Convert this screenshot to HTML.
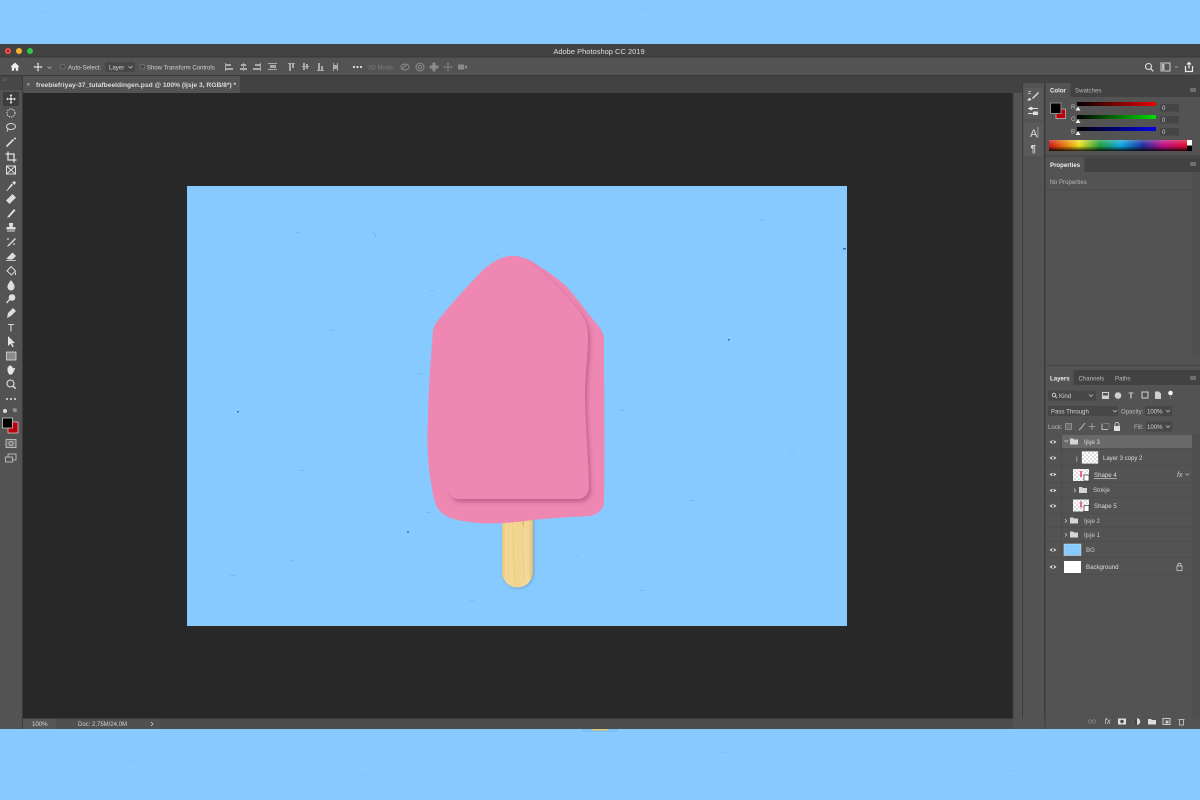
<!DOCTYPE html>
<html><head><meta charset="utf-8"><title>Adobe Photoshop CC 2019</title>
<style>
html,body{margin:0;padding:0;background:#88caff;width:1200px;height:800px;overflow:hidden}
svg{display:block;position:absolute;left:0;top:0;filter:blur(.3px)}
text{font-family:"Liberation Sans",sans-serif;font-size:6.1px;fill:#d2d2d2}
</style></head><body>
<svg width="1200" height="800" viewBox="0 0 1200 800" xmlns="http://www.w3.org/2000/svg">
<defs>
<filter id="sh" x="-20%" y="-20%" width="140%" height="140%"><feDropShadow dx="2" dy="3" stdDeviation="2.2" flood-color="#9a3068" flood-opacity=".5"/></filter>
<filter id="sh2" x="-20%" y="-20%" width="140%" height="140%"><feDropShadow dx="1" dy="1" stdDeviation="1.2" flood-color="#2a5f9a" flood-opacity=".35"/></filter>
<linearGradient id="spec" x1="0" x2="1" y1="0" y2="0">
<stop offset="0" stop-color="#d01818"/><stop offset=".12" stop-color="#e88010"/><stop offset=".22" stop-color="#eee020"/><stop offset=".37" stop-color="#20a040"/><stop offset=".52" stop-color="#10a8e0"/><stop offset=".68" stop-color="#2030a0"/><stop offset=".83" stop-color="#c01088"/><stop offset="1" stop-color="#e01030"/>
</linearGradient>
<linearGradient id="specv" x1="0" x2="0" y1="0" y2="1"><stop offset="0" stop-color="#fff" stop-opacity=".25"/><stop offset=".45" stop-color="#fff" stop-opacity="0"/><stop offset=".55" stop-color="#000" stop-opacity="0"/><stop offset="1" stop-color="#000" stop-opacity=".85"/></linearGradient>
<linearGradient id="r" x1="0" x2="1"><stop offset="0" stop-color="#000"/><stop offset="1" stop-color="#ee0000"/></linearGradient>
<linearGradient id="g" x1="0" x2="1"><stop offset="0" stop-color="#000"/><stop offset="1" stop-color="#00e000"/></linearGradient>
<linearGradient id="b" x1="0" x2="1"><stop offset="0" stop-color="#000"/><stop offset="1" stop-color="#0000e6"/></linearGradient>
<linearGradient id="stick" x1="0" x2="1"><stop offset="0" stop-color="#e9c67e"/><stop offset=".15" stop-color="#f3d998"/><stop offset=".55" stop-color="#f2d48c"/><stop offset=".85" stop-color="#f3da9c"/><stop offset="1" stop-color="#e0bb72"/></linearGradient>
<pattern id="chk" width="4" height="4" patternUnits="userSpaceOnUse"><rect width="4" height="4" fill="#fff"/><rect width="2" height="2" fill="#ddd"/><rect x="2" y="2" width="2" height="2" fill="#ddd"/></pattern>
<g id="eye"><path d="M-3.5 0Q0-3.2 3.5 0Q0 3.2-3.5 0Z" fill="#ddd"/><circle r="1.1" fill="#444"/></g>
<g id="folder"><path d="M-4-3h3l1 1h4v5h-8z" fill="#d5d5d5"/></g>
</defs>

<!-- outer background -->
<rect x="-2" y="-2" width="1204" height="804" fill="#88caff"/>
<g fill="#70b6f2" opacity=".3">
<rect x="40" y="12" width="7" height="1"/><rect x="300" y="22" width="5" height="1"/><rect x="640" y="8" width="6" height="1"/><rect x="980" y="28" width="7" height="1"/><rect x="130" y="760" width="8" height="1"/><rect x="360" y="775" width="6" height="1"/><rect x="720" y="752" width="7" height="1"/><rect x="1010" y="770" width="8" height="1"/><rect x="480" y="785" width="5" height="1"/><rect x="90" y="745" width="5" height="1"/>
</g>
<rect x="582" y="729" width="36" height="3" fill="#74b4ea" opacity=".6"/>
<rect x="592" y="729" width="16" height="1.6" fill="#d8c878"/>

<!-- window -->
<rect x="0" y="44" width="1200" height="685" fill="#535353"/>
<rect x="0" y="44" width="1200" height="13" fill="#424242"/>
<rect x="0" y="56.5" width="1200" height="1" fill="#383838"/>
<circle cx="8" cy="51" r="3" fill="#f0504a"/><circle cx="8" cy="51" r="1" fill="#7a1410"/>
<circle cx="19" cy="51" r="3" fill="#f5b52c"/>
<circle cx="30" cy="51" r="3" fill="#2fc944"/>
<text x="599" y="54" text-anchor="middle" style="font-size:7.5px;fill:#dedede">Adobe Photoshop CC 2019</text>

<!-- options bar -->
<rect x="0" y="57.5" width="1200" height="18.5" fill="#535353"/>
<rect x="0" y="75" width="1200" height="1" fill="#3c3c3c"/>
<path d="M15 62.5l-4.5 4.3h1.3v4h2.3v-2.5h1.8v2.500h2.300v-4h1.300z" fill="#eee"/>
<g fill="#ddd"><rect x="37.500" y="64" width="1" height="6"/><rect x="35" y="66.500" width="6" height="1"/><circle cx="38" cy="67" r="1.200"/><path d="M38 62.500l1.400 1.800h-2.800zM38 71.500l1.400-1.800h-2.800zM33.500 67l1.800-1.400v2.800zM42.500 67l-1.800-1.400v2.800z"/></g>
<path d="M47.500 66.500l2 2 2-2" fill="none" stroke="#aaa" stroke-width=".8"/>
<rect x="60.500" y="64.500" width="4.500" height="4.500" rx="1" fill="#4a4a4a" stroke="#777" stroke-width=".7"/>
<text x="68" y="69.300">Auto-Select:</text>
<rect x="105" y="62" width="30" height="10" rx="1" fill="#474747"/>
<text x="109" y="69.300">Layer</text>
<path d="M128.500 66.300l2 1.800 2-1.800" fill="none" stroke="#bbb" stroke-width=".8"/>
<rect x="140" y="64.500" width="4.500" height="4.500" rx="1" fill="#4a4a4a" stroke="#777" stroke-width=".7"/>
<text x="147" y="69.300" style="font-size:6px">Show Transform Controls</text>
<g fill="#a9a9a9">
<rect x="225" y="63" width="1" height="8"/><rect x="226" y="64" width="5" height="2"/><rect x="226" y="68" width="7" height="2"/>
<rect x="243" y="63" width="1" height="8"/><rect x="241" y="64" width="5" height="2"/><rect x="240" y="68" width="7" height="2"/>
<rect x="260" y="63" width="1" height="8"/><rect x="255" y="64" width="5" height="2"/><rect x="253" y="68" width="7" height="2"/>
<rect x="268" y="63" width="9" height="1"/><rect x="270" y="65" width="6" height="3"/><rect x="268" y="69" width="9" height="1"/>
<rect x="288" y="63" width="7" height="1"/><rect x="289" y="64" width="2" height="7"/><rect x="292" y="64" width="2" height="4"/>
<rect x="302" y="66" width="7" height="1"/><rect x="303" y="63" width="2" height="7"/><rect x="306" y="64" width="2" height="5"/>
<rect x="317" y="70" width="7" height="1"/><rect x="318" y="63" width="2" height="7"/><rect x="321" y="66" width="2" height="4"/>
<rect x="333" y="63" width="1" height="8"/><rect x="337" y="63" width="1" height="8"/><rect x="334" y="65" width="3" height="4"/>
</g>
<g fill="#e2e2e2"><circle cx="354" cy="67" r="1.100"/><circle cx="357.500" cy="67" r="1.100"/><circle cx="361" cy="67" r="1.100"/></g>
<text x="368" y="69.300" style="fill:#7d7d7d">3D Mode:</text>
<g fill="none" stroke="#8b8b8b" stroke-width="1">
<ellipse cx="405" cy="67" rx="4" ry="3"/><path d="M402 69l5-5"/>
<circle cx="420" cy="67" r="4"/><circle cx="420" cy="67" r="1.800"/>
</g>
<g fill="#8b8b8b">
<circle cx="434" cy="67" r="3"/><path d="M434 62l2 2h-4zM434 72l2-2h-4zM429 67l2-2v4zM439 67l-2-2v4z"/>
<circle cx="448" cy="67" r="1.200"/><path d="M448 62.500l1.500 2h-3zM448 71.500l1.500-2h-3zM443.500 67l2-1.500v3zM452.500 67l-2-1.500v3z"/>
<rect x="458" y="64.500" width="6" height="5"/><path d="M464 67l3-2v4z"/>
</g>
<circle cx="1148.500" cy="66.500" r="3" fill="none" stroke="#e0e0e0" stroke-width="1.100"/><path d="M1150.700 68.700l2.600 2.600" stroke="#e0e0e0" stroke-width="1.200"/>
<rect x="1161" y="63" width="9" height="8" fill="#555" stroke="#ccc" stroke-width="1"/><rect x="1162" y="64" width="2.500" height="6" fill="#bbb"/>
<rect x="1175" y="66.500" width="3" height="1" fill="#999"/>
<path d="M1185.500 66v5.500h7V66M1189 68.500V62.500M1187 64.500l2-2 2 2" fill="none" stroke="#eee" stroke-width="1.200"/>

<!-- tab row -->
<rect x="0" y="76" width="1200" height="17" fill="#424242"/>
<rect x="23" y="76" width="217" height="17" fill="#535353"/>
<path d="M27 83l2.500 2.500M29.500 83L27 85.500" stroke="#aaa" stroke-width=".7"/>
<text x="36" y="87" style="font-size:6.7px;font-weight:700;fill:#dcdcdc">freebiefriyay-37_tutafbeeldingen.psd @ 100% (Ijsje 3, RGB/8*) *</text>

<!-- toolbar -->
<rect x="0" y="76" width="22" height="14" fill="#474747"/>
<path d="M3 78l1.500 1.500L3 81M5.500 78L7 79.500 5.500 81" fill="none" stroke="#8a8a8a" stroke-width=".5"/>
<rect x="0" y="90" width="22" height="639" fill="#535353"/>
<rect x="22" y="76" width="1" height="653" fill="#3a3a3a"/>
<rect x="3" y="92" width="16" height="14" fill="#3d3d3d"/>
<g fill="#dedede">
<rect x="10.500" y="95.500" width="1" height="7"/><rect x="7.500" y="98.500" width="7" height="1"/><circle cx="11" cy="99" r="1.300"/><path d="M11 94l1.500 2h-3zM11 104l1.500-2h-3zM6 99l2-1.500v3zM16 99l-2-1.500v3z"/>
</g>
<g fill="none" stroke="#dedede" stroke-width="1">
<circle cx="11" cy="113" r="4" stroke-dasharray="1.400 1"/>
<ellipse cx="11" cy="126.500" rx="4.500" ry="3"/><path d="M8 129l-1 2.500"/>
<path d="M6.500 146.500l7-7" stroke-width="1.600"/><path d="M15 137.500v2M14 138.500h2"/>
<path d="M8 151.500v8.500h8.500M5.500 154h8.500v8.500" stroke-width="1.300"/>
<rect x="6.500" y="166" width="9" height="8"/><path d="M6.500 166l9 8M15.500 166l-9 8"/>
</g>
<g fill="#dedede">
<path d="M7 190l-1 1 1 0 6-6-1.500-1.500zM12 182.500l2.500-1.500 1.500 1.500-1.500 2.500z"/>
<path d="M6 201.500l6.500-6.500 3.500 3.500-6.500 6.500z" transform="translate(0,-1)"/>
<path d="M7 218l1-2 6-7 1.500 1.500-6 6.500z"/>
<path d="M9 223h4v3l-1 1h3.500v2.500h-9V227H10l-1-1zM7 230.500h8v1H7z"/>
<path d="M7 247l1-2 7-7 1 1-7 7z"/><circle cx="14" cy="244" r=".9"/><circle cx="8" cy="239" r=".9"/>
<path d="M6.500 258.500l6-6 3.500 3.500-3.500 3.500h-4z"/><rect x="6" y="260" width="10" height=".8"/>
</g>
<g fill="none" stroke="#dedede" stroke-width="1"><path d="M7 271l4-4.500 4.500 4.500-4 4z"/><path d="M15.500 272.500v2.500"/></g>
<g fill="#dedede">
<path d="M11 280q4 5 3.500 7a3.500 3.500 0 0 1-7 0q-.5-2 3.500-7z"/>
<circle cx="12" cy="297.500" r="3.300"/><path d="M10 300l-3 3.500-1-1 3-3.500z"/>
<path d="M7 318l1-5 5-5 3 3-5 5z"/>
</g>
<text x="11" y="331.500" text-anchor="middle" style="font-size:11px;fill:#e2e2e2">T</text>
<path d="M8 336v10l2.500-2.200 2 3.500 1.300-.8-2-3.400h3.200z" fill="#e2e2e2"/>
<rect x="6.500" y="352" width="9.500" height="8" fill="#8a8a8a" stroke="#ddd" stroke-width=".8"/>
<path d="M7.500 371v-3.500l1 0v-1.500h1v-.8h1v.8h1v.5h1v1.500h1v.7l1-1 .7.7-1.700 3.600-1.500 2.500H9z" fill="#e6e6e6"/>
<circle cx="10.500" cy="383.500" r="3.500" fill="none" stroke="#dedede" stroke-width="1.100"/><path d="M13 386l2.700 2.700" stroke="#dedede" stroke-width="1.400"/>
<g fill="#e2e2e2"><circle cx="7" cy="399" r="1"/><circle cx="11" cy="399" r="1"/><circle cx="15" cy="399" r="1"/></g>
<circle cx="5" cy="411" r="2" fill="#ddd"/><path d="M13 409h3v3" fill="none" stroke="#ccc" stroke-width=".8"/><path d="M15 412l-2-2.500" stroke="#ccc" stroke-width=".8"/>
<rect x="8" y="422" width="10" height="11" fill="#b8000f" stroke="#eee" stroke-width=".6"/>
<rect x="2.500" y="418" width="10" height="10" fill="#000" stroke="#ddd" stroke-width=".7"/>
<rect x="6" y="439.500" width="10" height="8" fill="#6c6c6c" stroke="#ccc" stroke-width=".8"/><circle cx="11" cy="443.500" r="2" fill="none" stroke="#ccc" stroke-width=".8"/>
<rect x="8" y="454" width="8" height="6" fill="none" stroke="#ccc" stroke-width=".8"/><rect x="5.500" y="457" width="7" height="5" fill="#555" stroke="#ccc" stroke-width=".8"/>

<!-- pasteboard -->
<rect x="23" y="93" width="990" height="625.500" fill="#282828"/>

<!-- canvas -->
<rect x="187" y="186" width="660" height="440" fill="#87caff"/>
<g fill="#5fa8e6" opacity=".45">
<rect x="296" y="232" width="3" height="1.200"/><rect x="373" y="232" width="1.500" height="6" transform="rotate(-20 373 232)"/><rect x="417" y="373" width="4" height="1"/><rect x="300" y="470" width="5" height="1"/><rect x="690" y="500" width="5" height="1"/><rect x="760" y="220" width="4" height="1"/><rect x="640" y="590" width="4" height="1"/><rect x="230" y="575" width="5" height="1"/><rect x="620" y="410" width="4" height="1"/><rect x="790" y="450" width="4" height="1"/><rect x="330" y="330" width="5" height="1"/><rect x="470" y="600" width="4" height="1"/><rect x="430" y="290" width="4" height="1"/><rect x="575" y="555" width="3" height="1"/><rect x="290" y="560" width="3" height="1"/><rect x="495" y="255" width="3" height="1"/><rect x="427" y="512" width="4" height="1"/>
</g>
<rect x="843" y="248" width="3" height="1.500" fill="#2b6cb8"/><rect x="728" y="339" width="1.500" height="1.500" fill="#1c5ca8"/><rect x="237" y="411" width="2" height="1.500" fill="#2b78c8"/><rect x="407" y="531" width="2" height="1.500" fill="#2b78c8"/>

<!-- popsicle: stick -->
<path d="M502 495h31v77a15.500 15.500 0 0 1-31 0z" fill="url(#stick)" filter="url(#sh2)"/>
<g stroke="#d9ae5d" stroke-width=".6" fill="none" opacity=".4"><path d="M508 500q1 40 0 80"/><path d="M513 500q-1 30 2 85"/><path d="M523 500q2 20 0 30q-1 20 2 50"/><path d="M528 510v60"/></g>
<path d="M520 500q5 10 4 28q-4-6-4-28z" fill="#dcae5c" opacity=".55"/>
<rect x="502" y="499" width="31" height="6" fill="#c8975a" opacity=".35"/>

<!-- back body -->
<path d="M513 256C500 256 488 265 480 273C466 288 452 303 440 318C435 324 433 328 433 332C431 356 428 395 428 420C426 450 429 478 435 503C439 513 447 518 458 520C475 524 497 525 533 520C552 518 572 517 590 516C599 514 603 509 604 503C605 450 604 390 604 340C604 335 602 331 600 328C596 323 591 317 587 312C581 304 574 295 567 287C558 279 549 272 540 267C532 260 522 256 513 256Z" fill="#ee88b3"/>
<!-- front body with shadow -->
<path d="M513 258C522 258 532 263 543 273C551 281 559 289 567 297C574 304 580 311 583 317C587 323 588 330 588 338C588 356 585 375 585 395C585 420 588 450 589 487C589 494 584 499 578 499L459 499C452 499 449 494 449 488C449 455 451 415 450 383C450 365 446 352 446 338C446 330 448 324 452 318C470 298 490 258 513 258Z" fill="#ee87b1" filter="url(#sh)"/>
<!-- hide left + top shadow so only right/bottom edges read -->
<path d="M513 256C500 256 488 265 480 273C466 288 452 303 440 318C435 324 433 328 433 332C431 356 429 395 429 420C428 450 431 470 438 486L452 490L470 480L555 470L575 320L545 280L530 262C524 258 518 256 513 256Z" fill="#ee88b3"/>
<path d="M460 300l5 12M540 440l5 16M510 275l3 14" stroke="#e87eaa" stroke-width=".5" fill="none" opacity=".6"/>

<!-- right scroller + dock -->
<rect x="1013" y="93" width="9" height="625" fill="#535353"/>
<rect x="1012.500" y="93" width="1" height="625" fill="#3c3c3c"/>
<rect x="1022" y="76" width="178" height="653" fill="#535353"/>
<rect x="1022" y="76" width="1" height="653" fill="#3c3c3c"/>
<rect x="1044" y="76" width="1.500" height="653" fill="#3c3c3c"/>
<rect x="1022" y="76" width="178" height="7" fill="#424242"/>
<rect x="1024" y="88" width="19" height="31" fill="#5a5a5a"/>
<rect x="1024" y="123" width="19" height="33" fill="#5a5a5a"/>
<g fill="#dedede">
<path d="M1030 98q-2 0-2.500 2.500 3 .5 4-1zM1032 98l6-6 1 1-6 6z"/>
<rect x="1028" y="91" width="3" height="1" opacity=".7"/><rect x="1028" y="93" width="3" height="1" opacity=".7"/>
<rect x="1028" y="108" width="10" height="1"/><rect x="1028" y="113" width="10" height="1"/><circle cx="1031" cy="108.500" r="1.800"/><rect x="1033" y="111.500" width="5" height="3.500"/>
</g>
<text x="1030" y="137" style="font-size:11px;fill:#dcdcdc">A</text><rect x="1037.500" y="127" width=".8" height="11" fill="#aaa"/>
<text x="1030.500" y="152" style="font-size:10px;font-weight:700;fill:#dcdcdc">¶</text>

<!-- color panel -->
<rect x="1045.500" y="83" width="154.500" height="14" fill="#424242"/>
<rect x="1045.500" y="83" width="25" height="14" fill="#535353"/>
<text x="1050" y="92.500" style="font-weight:700;fill:#eee">Color</text>
<text x="1075" y="92.500" style="fill:#b8b8b8">Swatches</text>
<rect x="1190" y="88" width="6" height="4" fill="#6e6e6e"/>
<rect x="1056" y="109" width="9.500" height="9.500" fill="#b8000f" stroke="#ddd" stroke-width=".6"/>
<rect x="1050.500" y="103" width="10.500" height="10.500" fill="#000" stroke="#8a8a8a" stroke-width="1"/>
<text x="1071" y="109" style="font-size:6px;fill:#bbb">R</text><text x="1071" y="121" style="font-size:6px;fill:#bbb">G</text><text x="1071" y="133.500" style="font-size:6px;fill:#bbb">B</text>
<rect x="1077" y="102" width="79" height="4" fill="url(#r)"/><rect x="1077" y="115" width="79" height="4" fill="url(#g)"/><rect x="1077" y="127" width="79" height="4" fill="url(#b)"/>
<path d="M1078 106.500l2.500 4h-5zM1078 119l2.500 4h-5zM1078 131l2.500 4h-5z" fill="#eee"/>
<rect x="1160" y="104" width="19" height="7.500" fill="#454545"/><rect x="1160" y="116" width="19" height="7.500" fill="#454545"/><rect x="1160" y="128" width="19" height="7.500" fill="#454545"/>
<text x="1162" y="110" style="font-size:6px">0</text><text x="1162" y="122" style="font-size:6px">0</text><text x="1162" y="134" style="font-size:6px">0</text>
<rect x="1049" y="140" width="138" height="11" fill="url(#spec)"/><rect x="1049" y="140" width="138" height="11" fill="url(#specv)"/>
<rect x="1187" y="140" width="5" height="5.500" fill="#fff"/><rect x="1187" y="145.500" width="5" height="5.500" fill="#000"/>

<!-- properties -->
<rect x="1045.500" y="155.500" width="154.500" height="1.500" fill="#464646"/>
<rect x="1045.500" y="157.500" width="154.500" height="14.500" fill="#424242"/>
<rect x="1045.500" y="157.500" width="39" height="14.500" fill="#535353"/>
<text x="1050" y="167" style="font-weight:700;fill:#eee">Properties</text>
<rect x="1190" y="162" width="6" height="4" fill="#6e6e6e"/>
<text x="1049.500" y="184" style="fill:#b5b5b5">No Properties</text>
<rect x="1045.500" y="189" width="146" height="1" fill="#4a4a4a"/>
<rect x="1192" y="172" width="8" height="183" fill="#4f4f4f"/>

<!-- layers -->
<rect x="1045.500" y="365" width="154.500" height="1" fill="#464646"/>
<rect x="1045.500" y="370" width="154.500" height="15" fill="#424242"/>
<rect x="1045.500" y="370" width="28" height="15" fill="#535353"/>
<text x="1050" y="380.500" style="font-weight:700;fill:#eee">Layers</text>
<text x="1078.500" y="380.500" style="fill:#bbb">Channels</text>
<text x="1115" y="380.500" style="fill:#bbb">Paths</text>
<rect x="1190" y="376" width="6" height="4" fill="#6e6e6e"/>

<rect x="1048" y="390.500" width="48" height="10" fill="#474747"/>
<circle cx="1054" cy="395" r="1.800" fill="none" stroke="#ddd" stroke-width=".8"/><path d="M1055.300 396.300l1.700 1.700" stroke="#ddd" stroke-width=".8"/>
<text x="1059" y="398">Kind</text>
<path d="M1089 394.500l2 2 2-2" fill="none" stroke="#bbb" stroke-width=".8"/>
<g fill="#d0d0d0">
<path d="M1102 392h7v7h-7z M1103 393v2.500h5V393z" fill-rule="evenodd"/>
<circle cx="1118" cy="395.500" r="3.300"/>
<text x="1131" y="398.500" text-anchor="middle" style="font-size:8px;font-weight:700;fill:#d0d0d0">T</text>
<path d="M1142 392h6v6h-6z" fill="none" stroke="#d0d0d0" stroke-width="1"/>
<path d="M1155 391.500h4l2 2v5.500h-6z"/>
<circle cx="1170.500" cy="393" r="2.300" fill="#f2f2f2"/>
<rect x="1170" y="396" width="1" height="3" fill="#777"/>
</g>

<rect x="1048" y="406" width="70" height="10" fill="#474747"/>
<text x="1051" y="413.500">Pass Through</text>
<path d="M1113 410l2 2 2-2" fill="none" stroke="#bbb" stroke-width=".8"/>
<text x="1121" y="413.500" style="fill:#bbb">Opacity:</text>
<rect x="1145" y="406" width="27" height="10" fill="#474747"/>
<text x="1147" y="413.500">100%</text>
<path d="M1166 410l2 2 2-2" fill="none" stroke="#bbb" stroke-width=".8"/>

<text x="1048" y="429" style="fill:#bbb">Lock:</text>
<rect x="1065.500" y="423.500" width="6" height="6" fill="#6a6a6a" stroke="#aaa" stroke-width=".6"/>
<path d="M1079 430l2-2 4-5" stroke="#bbb" stroke-width="1" fill="none"/>
<path d="M1092 423v7M1088.500 426.500h7" stroke="#aaa" stroke-width=".8"/>
<path d="M1102 423.500v6h6" stroke="#bbb" stroke-width="1" fill="none"/><path d="M1104 423.500h5v5" stroke="#888" stroke-width=".7" fill="none"/>
<rect x="1114" y="426" width="6" height="5" fill="#e0e0e0"/><path d="M1115 426v-1.500a2 2 0 0 1 4 0V426" fill="none" stroke="#e0e0e0" stroke-width=".8"/>
<text x="1134" y="429" style="fill:#bbb">Fill:</text>
<rect x="1146" y="421.500" width="26" height="10" fill="#474747"/>
<text x="1147" y="429">100%</text>
<path d="M1166 425.500l2 2 2-2" fill="none" stroke="#bbb" stroke-width=".8"/>

<!-- layer rows -->
<rect x="1046" y="434" width="146" height="140" fill="#535353"/>
<rect x="1062" y="435" width="130" height="13" fill="#696969"/>
<g fill="none" stroke="#4a4a4a" stroke-width=".6">
<path d="M1046 449.500h146M1046 465.500h146M1046 482.500h146M1046 497.500h146M1046 513.500h146M1046 527.500h146M1046 541.500h146M1046 557.500h146M1046 574.500h146"/>
<path d="M1061.500 434v140"/>
</g>
<use href="#eye" x="1053" y="442"/><use href="#eye" x="1053" y="458"/><use href="#eye" x="1053" y="474.500"/><use href="#eye" x="1053" y="490.500"/><use href="#eye" x="1053" y="506"/><use href="#eye" x="1053" y="550"/><use href="#eye" x="1053" y="567"/>

<path d="M1064.500 440l1.800 2 1.800-2" fill="none" stroke="#ccc" stroke-width=".7"/>
<use href="#folder" x="1074" y="441.500"/>
<text x="1084" y="444" style="fill:#ddd">Ijsje 3</text>

<text x="1076" y="460" style="font-size:6px;fill:#ccc">ɟ</text>
<rect x="1082" y="451.500" width="16" height="12" fill="url(#chk)" stroke="#ddd" stroke-width=".4"/>
<text x="1103" y="460" style="font-size:6px;fill:#ddd">Layer 3 copy 2</text>

<rect x="1073" y="469" width="16" height="12" fill="url(#chk)"/><rect x="1080" y="471" width="2" height="6" fill="#ef5fa5"/><rect x="1084" y="475" width="5" height="6" fill="#fff" stroke="#333" stroke-width=".7"/>
<text x="1094" y="477" style="fill:#ddd;text-decoration:underline">Shape 4</text>
<text x="1177" y="477" style="font-size:7px;font-style:italic;fill:#ccc">fx</text>
<path d="M1185.500 473.500l1.800 1.800 1.800-1.800" fill="none" stroke="#bbb" stroke-width=".7"/>

<path d="M1074 488.500l1.800 1.800-1.800 1.800" fill="none" stroke="#ccc" stroke-width=".7"/>
<use href="#folder" x="1083" y="490"/>
<text x="1093" y="492" style="fill:#ccc">Stokje</text>

<rect x="1073" y="499.500" width="16" height="12" fill="url(#chk)"/><rect x="1080" y="501.500" width="2" height="6" fill="#ef5fa5"/><rect x="1084" y="505.500" width="5" height="6" fill="#fff" stroke="#333" stroke-width=".7"/>
<text x="1094" y="508" style="fill:#ddd">Shape 5</text>

<path d="M1065 519l1.800 1.800-1.800 1.800" fill="none" stroke="#ccc" stroke-width=".7"/>
<use href="#folder" x="1074" y="520.500"/>
<text x="1084" y="523" style="fill:#ccc">Ijsje 2</text>
<path d="M1065 533l1.800 1.800-1.800 1.800" fill="none" stroke="#ccc" stroke-width=".7"/>
<use href="#folder" x="1074" y="534.500"/>
<text x="1084" y="537" style="fill:#ccc">Ijsje 1</text>

<rect x="1064" y="544" width="17" height="11.500" fill="#87caff" stroke="#ddd" stroke-width=".5"/>
<text x="1086" y="552" style="fill:#ccc">BG</text>
<rect x="1064" y="561" width="17" height="12" fill="#fff"/>
<text x="1086" y="569" style="fill:#ddd">Background</text>
<rect x="1177" y="566" width="5" height="4.500" fill="none" stroke="#ccc" stroke-width=".8"/><path d="M1178 566v-1.200a1.500 1.500 0 0 1 3 0V566" fill="none" stroke="#ccc" stroke-width=".8"/>

<rect x="1192" y="434" width="8" height="285" fill="#4f4f4f"/>

<!-- bottom icons -->
<circle cx="1090" cy="721.500" r="1.700" fill="none" stroke="#808080" stroke-width=".8"/><circle cx="1094" cy="721.500" r="1.700" fill="none" stroke="#808080" stroke-width=".8"/>
<text x="1104.500" y="724" style="font-size:8px;font-style:italic;fill:#ccc">fx</text>
<rect x="1118" y="718.500" width="8" height="6" fill="#e0e0e0"/><circle cx="1122" cy="721.500" r="1.700" fill="#444"/>
<circle cx="1137" cy="721.500" r="3.300" fill="#dcdcdc"/><path d="M1137 718.200a3.300 3.300 0 0 0 0 6.600z" fill="#444"/>
<path d="M1148 719h3l1 1h4v4.500h-8z" fill="#dcdcdc"/>
<rect x="1163" y="718.500" width="7" height="6" fill="none" stroke="#ccc" stroke-width="1"/><rect x="1165.500" y="720.500" width="3" height="3" fill="#ccc"/>
<path d="M1178.500 719.500h6M1179.500 720v5h4v-5" fill="none" stroke="#b8b8b8" stroke-width="1"/>

<!-- status bar -->
<rect x="23" y="718.500" width="1022" height="10.500" fill="#4c4c4c"/>
<rect x="23" y="718.500" width="33" height="10.500" fill="#565656"/>
<rect x="56" y="718.500" width="104" height="10.500" fill="#505050"/>
<rect x="1013" y="718.500" width="31" height="10.500" fill="#535353"/>
<text x="32" y="726" style="fill:#d8d8d8">100%</text>
<text x="78" y="726" style="font-size:6px;fill:#d0d0d0">Doc: 2,75M/24,0M</text>
<path d="M151 722l2 2-2 2" fill="none" stroke="#ccc" stroke-width=".8"/>
</svg>
</body></html>
